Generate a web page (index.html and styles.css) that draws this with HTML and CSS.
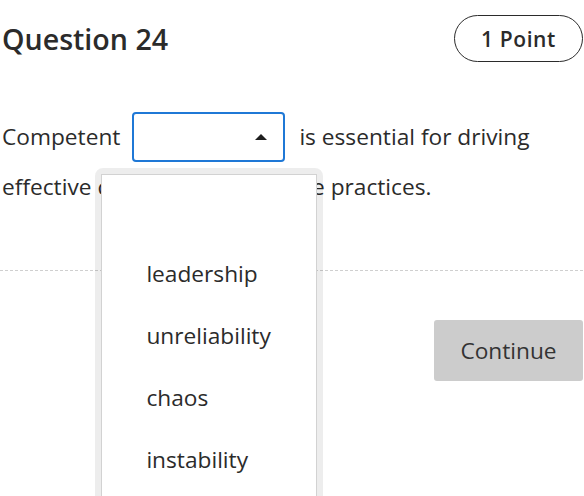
FILE: index.html
```html
<!DOCTYPE html>
<html lang="en">
<head>
<meta charset="utf-8">
<title>Question 24</title>
<link rel="stylesheet" href="styles.css">
</head>
<body>
<div class="page">
  <header class="header">
    <h1 class="title">Question 24</h1>
    <span class="points">1 Point</span>
  </header>
  <p class="question">Competent<span class="select"><span class="arrow"></span><span class="dropdown"><span class="list"><span class="option option-empty">&nbsp;</span><span class="option">leadership</span><span class="option">unreliability</span><span class="option">chaos</span><span class="option">instability</span></span></span></span>is essential for driving effective cohesive and creative practices.</p>
  <hr class="divider">
  <div class="footer">
    <button class="continue" type="button">Continue</button>
  </div>
</div>
</body>
</html>
```

FILE: styles.css
```css
html, body {
  margin: 0;
  padding: 0;
  background: #ffffff;
}
body {
  font-family: "Open Sans", "DejaVu Sans", sans-serif;
  color: #2b2b2b;
  overflow: hidden;
  height: 496px;
}
.page {
  padding: 0 1px 0 2px;
}
.header {
  display: flex;
  justify-content: space-between;
  align-items: center;
  margin-top: 15px;
}
.title {
  margin: 0;
  font-size: 28.6px;
  font-weight: 600;
  line-height: 47px;
}
.points {
  display: flex;
  align-items: center;
  justify-content: center;
  box-sizing: border-box;
  width: 129px;
  height: 47px;
  border: 1px solid #2b2b2b;
  border-radius: 24px;
  font-size: 21px;
  font-weight: 600;
  letter-spacing: 0.6px;
}
.question {
  margin: 50px 0 0 0;
  font-size: 22.7px;
  line-height: 50px;
}
.select {
  position: relative;
  display: inline-block;
  vertical-align: top;
  box-sizing: border-box;
  width: 153px;
  height: 50px;
  border: 2px solid #1f78d6;
  border-radius: 4px;
  margin: 0 14px 0 12px;
}
.arrow {
  position: absolute;
  right: 16px;
  top: 20px;
  width: 0;
  height: 0;
  border-left: 6px solid transparent;
  border-right: 6px solid transparent;
  border-bottom: 6px solid #1e1e1e;
}
.dropdown {
  position: absolute;
  left: -39px;
  top: 54px;
  z-index: 5;
  box-sizing: border-box;
  width: 228px;
  height: 360px;
  border: 6px solid rgba(0, 0, 0, 0.07);
  border-radius: 8px;
  background-clip: padding-box;
}
.list {
  display: flex;
  flex-direction: column;
  box-sizing: border-box;
  height: 100%;
  background: #ffffff;
  border: 1px solid #d2d2d2;
  padding-top: 6px;
}
.option {
  display: flex;
  align-items: center;
  height: 62px;
  padding-left: 44px;
  font-size: 22.7px;
  line-height: 30px;
  color: #2b2b2b;
}
.divider {
  margin: 58px 0 0 -2px;
  border: 0;
  border-top: 1px dashed #cfcfcf;
  height: 0;
}
.footer {
  display: flex;
  justify-content: flex-end;
  margin-top: 49px;
}
.continue {
  width: 149px;
  height: 61px;
  border: 0;
  border-radius: 3px;
  background: #cccccc;
  color: #333333;
  font-family: "Open Sans", "DejaVu Sans", sans-serif;
  font-size: 22.7px;
  padding: 0;
}
```
